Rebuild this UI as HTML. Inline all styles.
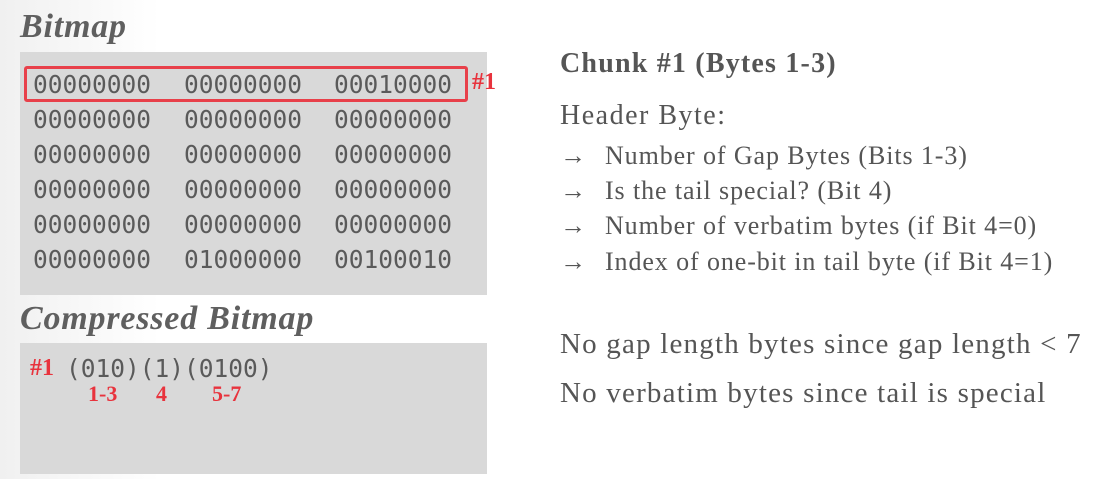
<!DOCTYPE html>
<html><head><style>
body{margin:0;width:1106px;height:479px;background:linear-gradient(90deg,#f0f0f0 0,#fff 160px);position:relative;overflow:hidden;font-family:"Liberation Serif",serif;color:#555}
.a{position:absolute;white-space:nowrap}
.h{font-style:italic;font-weight:bold;font-size:34px;letter-spacing:0.8px;color:#5f5f5f}
.box{position:absolute;background:#d9d9d9}
.m{font-family:"DejaVu Sans Mono","Liberation Mono",monospace;font-size:24.5px;color:#5a5a5a;line-height:30px}
.r{color:#e8333d;font-weight:bold}
.t{font-size:26px;letter-spacing:0.9px;color:#555}
.ar{display:inline-block;width:45px}
</style></head><body>
<div class="a h" style="left:20px;top:8px">Bitmap</div>
<div class="box" style="left:20px;top:52px;width:467px;height:243px"></div>
<div class="a" style="left:24px;top:66px;width:438px;height:30px;border:3px solid #e8404a;border-radius:3px"></div>
<div class="a r" style="left:472px;top:69px;font-size:24px">#1</div>
<div class="a m" style="left:33px;top:70px">00000000<br><div style="height:5px"></div>00000000<div style="height:5px"></div>00000000<div style="height:5px"></div>00000000<div style="height:5px"></div>00000000<div style="height:5px"></div>00000000</div>
<div class="a m" style="left:184px;top:70px">00000000<div style="height:5px"></div>00000000<div style="height:5px"></div>00000000<div style="height:5px"></div>00000000<div style="height:5px"></div>00000000<div style="height:5px"></div>01000000</div>
<div class="a m" style="left:334px;top:70px">00010000<div style="height:5px"></div>00000000<div style="height:5px"></div>00000000<div style="height:5px"></div>00000000<div style="height:5px"></div>00000000<div style="height:5px"></div>00100010</div>
<div class="a h" style="left:20px;top:300px">Compressed Bitmap</div>
<div class="box" style="left:20px;top:343px;width:467px;height:131px"></div>
<div class="a r" style="left:30px;top:355px;font-size:24px">#1</div>
<div class="a m" style="left:66px;top:354px">(010)(1)(0100)</div>
<div class="a r" style="left:88px;top:381px;font-size:22px">1-3</div>
<div class="a r" style="left:156px;top:381px;font-size:22px">4</div>
<div class="a r" style="left:212px;top:381px;font-size:22px">5-7</div>
<div class="a" style="left:560px;top:48px;font-size:28px;letter-spacing:1.2px;font-weight:bold;color:#555">Chunk #1 (Bytes 1-3)</div>
<div class="a t" style="left:560px;top:100px;font-size:28px;letter-spacing:1.5px">Header Byte:</div>
<div class="a t" style="left:560px;top:141px"><span class="ar">→</span>Number of Gap Bytes (Bits 1-3)</div>
<div class="a t" style="left:560px;top:176px"><span class="ar">→</span>Is the tail special? (Bit 4)</div>
<div class="a t" style="left:560px;top:211px"><span class="ar">→</span>Number of verbatim bytes (if Bit 4=0)</div>
<div class="a t" style="left:560px;top:247px"><span class="ar">→</span>Index of one-bit in tail byte (if Bit 4=1)</div>
<div class="a" style="left:560px;top:328px;font-size:29px;letter-spacing:1.2px">No gap length bytes since gap length &lt; 7</div>
<div class="a" style="left:560px;top:377px;font-size:29px;letter-spacing:1.2px">No verbatim bytes since tail is special</div>
</body></html>
